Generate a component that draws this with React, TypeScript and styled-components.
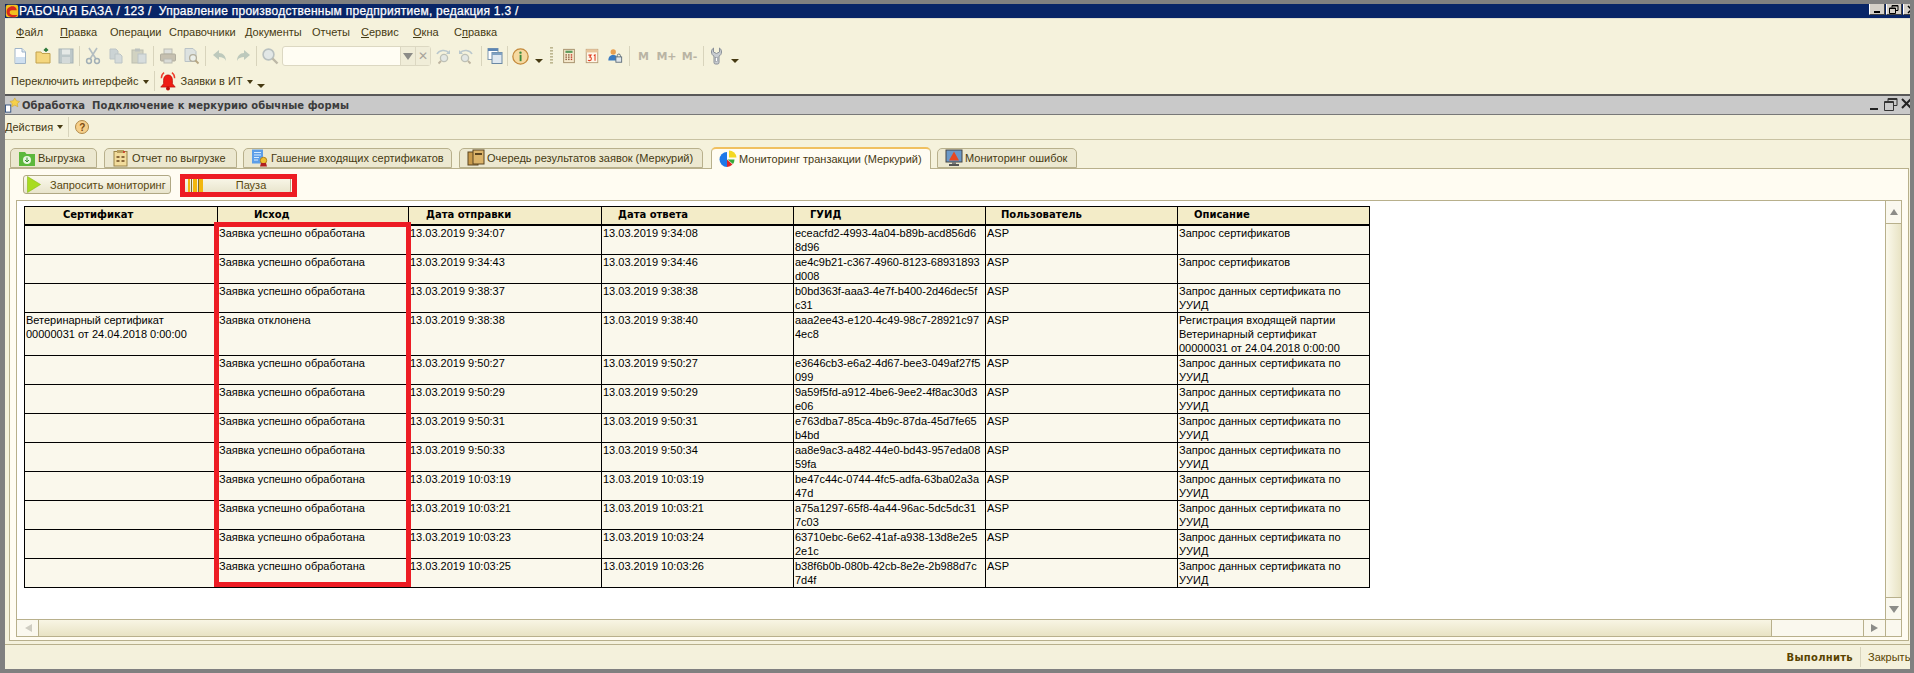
import React from "react";
import styled, { createGlobalStyle } from "styled-components";

const UI_FONT = `"Liberation Sans", Arial, sans-serif`;
const BOLD_FONT = `"DejaVu Sans", Verdana, sans-serif`;

const GlobalStyle = createGlobalStyle`
  html, body { margin: 0; padding: 0; background: #808080; }
  body { font-family: ${UI_FONT}; font-size: 11px; color: #463a12; }
  * { box-sizing: border-box; }
`;

const Desktop = styled.div`
  width: 1914px;
  height: 673px;
  overflow: hidden;
  background: #f4f1dc;
  border: solid #808080;
  border-width: 4px 4px 4px 5px;
  display: flex;
  flex-direction: column;
`;

/* main window title */
const TitleBar = styled.div`
  height: 14px;
  flex: none;
  background: #082567;
  color: #fff;
  display: flex;
  align-items: center;
  font-size: 12px;
  letter-spacing: 0.26px;
  position: relative;
  white-space: pre;
  -webkit-text-stroke: 0.25px #fff;
`;

const TitleText = styled.span`
  margin-left: 0;
  flex: 1;
`;

const WinButtons = styled.div`
  display: flex;
  height: 11px;
  align-self: flex-start;
  gap: 1px;
  margin-right: -9px;
`;

const WinButton = styled.div`
  width: 16px;
  height: 11px;
  background: #d4d0c8;
  border-right: 1px solid #404040;
  border-bottom: 1px solid #404040;
  border-left: 1px solid #fff;
  display: flex;
  align-items: center;
  justify-content: center;
`;

const MenuArea = styled.div`
  height: 76px;
  flex: none;
  background: #f5f2dc;
  border-top: 1px solid #e2e0d0;
`;

const MenuRow = styled.div`
  height: 25px;
  display: flex;
  align-items: center;
  padding-left: 11px;
  font-size: 11px;
`;

const MenuItem = styled.span<{ $w?: number }>`
  width: ${(p) => (p.$w ? `${p.$w}px` : "auto")};
  flex: none;
`;

const ToolRow = styled.div`
  height: 24px;
  display: flex;
  align-items: center;
  padding-left: 3px;
`;

const ToolSlot = styled.div<{ $w?: number; $dim?: boolean }>`
  width: ${(p) => p.$w || 23}px;
  height: 20px;
  flex: none;
  display: flex;
  align-items: center;
  justify-content: center;
  opacity: ${(p) => (p.$dim ? 0.72 : 1)};
`;

const ToolSep = styled.div<{ $w?: number }>`
  width: ${(p) => p.$w || 6}px;
  height: 20px;
  flex: none;
  display: flex;
  justify-content: center;

  &::after {
    content: "";
    width: 1px;
    background: #d8d4bc;
  }
`;

const MemKey = styled.span`
  font-family: ${BOLD_FONT};
  font-weight: bold;
  font-size: 11px;
  color: #b9b4a4;
`;

const DownMark = styled.div`
  margin-top: 10px;
  width: 0;
  height: 0;
  border: 4px solid transparent;
  border-top: 4px solid #463a12;
  border-bottom: 0;
`;

const SearchBox = styled.div`
  width: 149px;
  height: 20px;
  margin-left: 1px;
  flex: none;
  display: flex;
  background: #fffdf3;
  border: 1px solid #dcd8c2;
  border-radius: 3px;
`;

const SearchInput = styled.div`
  flex: 1;
`;

const SearchBtn = styled.div`
  width: 15px;
  background: #f0edd8;
  border-left: 1px solid #dcd8c2;
  display: flex;
  align-items: center;
  justify-content: center;
  color: #a8a49a;
  font-size: 12px;
`;

const LinkRow = styled.div`
  height: 26px;
  display: flex;
  align-items: center;
  padding-left: 3px;
  font-size: 11px;
  position: relative;
`;

const SmallArrow = styled.span`
  display: inline-block;
  width: 0;
  height: 0;
  margin-left: 4px;
  border: 3px solid transparent;
  border-top: 4px solid #463a12;
  border-bottom: 0;
  vertical-align: middle;
`;

const LinkSep = styled.div`
  width: 1px;
  height: 20px;
  background: #d8d4bc;
  margin: 0 3px 0 5px;
`;

const LinkLabel = styled.span`
  white-space: nowrap;
  margin-left: 3px;
`;

/* child window */
const ChildTitle = styled.div`
  height: 21px;
  flex: none;
  background: #c9c9c9;
  border-top: 2px solid #585858;
  border-bottom: 1px solid #787878;
  display: flex;
  align-items: center;
  font-family: ${BOLD_FONT};
  font-weight: bold;
  font-size: 10px;
  letter-spacing: 0.05px;
  color: #3c3c3c;
  white-space: pre;
`;

const ChildName = styled.span`
  flex: 1;
  margin-left: 1px;
`;

const ChildButtons = styled.div`
  display: flex;
  gap: 3px;
  margin-right: -3px;
`;

const ActionsRow = styled.div`
  height: 25px;
  flex: none;
  background: #f5f2dc;
  border-bottom: 1px solid #c8c2a2;
  display: flex;
  align-items: center;
  font-size: 11px;
`;

const HelpRound = styled.div`
  width: 14px;
  height: 14px;
  border-radius: 50%;
  margin-left: 3px;
  background: #f6cf8a;
  border: 1px solid #b08a4a;
  color: #7a4a10;
  font-size: 10px;
  font-weight: bold;
  display: flex;
  align-items: center;
  justify-content: center;
`;

const TabStrip = styled.div`
  height: 28px;
  flex: none;
  display: flex;
  align-items: flex-end;
  padding-left: 5px;
  background: #f5f2dc;
`;

const Tab = styled.div<{ $active?: boolean; $w: number; $gap: number }>`
  width: ${(p) => p.$w}px;
  height: ${(p) => (p.$active ? 22 : 20)}px;
  margin-right: ${(p) => p.$gap}px;
  flex: none;
  display: flex;
  align-items: center;
  padding-left: 7px;
  gap: 2px;
  font-size: 11px;
  white-space: nowrap;
  background: ${(p) => (p.$active ? "#fffcf2" : "#ece8d0")};
  border: 1px solid #b8b08c;
  border-top: ${(p) => (p.$active ? "2px solid #f0c060" : "1px solid #b8b08c")};
  border-bottom: ${(p) => (p.$active ? "0" : "1px solid #b8b08c")};
  border-radius: 5px 5px 0 0;
  position: relative;
  top: ${(p) => (p.$active ? 1 : 0)}px;
`;

const TabPanel = styled.div`
  flex: none;
  height: 473px;
  margin: 0 1px 0 4px;
  background: #fffcf2;
  border: 1px solid #b8b08c;
  border-bottom-width: 1px;
  padding: 0 6px 3px 6px;
  display: flex;
  flex-direction: column;
`;

const ButtonRow = styled.div`
  height: 31px;
  flex: none;
  display: flex;
  gap: 13px;
  padding: 6px 0 0 7px;
  align-items: flex-start;
`;

const FormButton = styled.div<{ $w: number }>`
  width: ${(p) => p.$w}px;
  height: 19px;
  flex: none;
  position: relative;
  display: flex;
  align-items: center;
  font-size: 11px;
  color: #5a4810;
  background: linear-gradient(#fbf9ec, #e8e4cc);
  border: 1px solid #b0a884;
  border-radius: 3px;
  padding-left: 3px;
`;

const ButtonLabel = styled.span<{ $center?: boolean }>`
  flex: 1;
  margin-left: 9px;
  text-align: ${(p) => (p.$center ? "center" : "left")};
  white-space: nowrap;
`;

const RedFrame = styled.div`
  position: absolute;
  border: 5px solid #ed1c24;
  pointer-events: none;
`;

const PauseFrame = styled(RedFrame)`
  left: -5px;
  top: -2px;
  width: 117px;
  height: 23px;
`;

const InnerPanel = styled.div`
  flex: 1;
  min-height: 0;
  background: #fff;
  border: 1px solid #b8b08c;
  display: grid;
  grid-template-columns: 1fr 16px;
  grid-template-rows: 1fr 17px;
`;

const Viewport = styled.div`
  padding: 5px 0 0 7px;
  overflow: hidden;
`;

const TableWrap = styled.div`
  position: relative;
  width: 1346px;
`;

const ResultFrame = styled(RedFrame)`
  left: 190px;
  top: 16px;
  width: 197px;
  height: 365px;
`;

const Grid = styled.table`
  width: 1346px;
  table-layout: fixed;
  border-collapse: collapse;
  font-size: 11px;
  line-height: 14px;
  color: #000;
`;

const HeadCell = styled.th<{ $pad: number }>`
  height: 18px;
  padding: 0 0 0 ${(p) => p.$pad}px;
  text-align: left;
  background: #f3ecc8;
  border: 1px solid #000;
  border-bottom: 2px solid #000;
  font-family: ${BOLD_FONT};
  font-size: 10px;
  font-weight: bold;
  white-space: nowrap;
`;

const Cell = styled.td<{ $h: number }>`
  height: ${(p) => p.$h}px;
  padding: 0 0 0 1px;
  vertical-align: top;
  background: #faf8ec;
  border: 1px solid #000;
  white-space: pre-line;
  overflow: hidden;
`;

const VScroll = styled.div`
  display: flex;
  flex-direction: column;
  border-left: 1px solid #b8b08c;
`;

const HScroll = styled.div`
  display: flex;
  border-top: 1px solid #b8b08c;
  grid-column: 1;
`;

const ScrollButton = styled.div<{ $size: number; $vertical?: boolean }>`
  flex: none;
  width: ${(p) => (p.$vertical ? "100%" : `${p.$size}px`)};
  height: ${(p) => (p.$vertical ? `${p.$size}px` : "100%")};
  background: #faf8ee;
  display: flex;
  align-items: center;
  justify-content: center;
`;

const ThumbH = styled.div<{ $w: number }>`
  width: ${(p) => p.$w}px;
  flex: none;
  background: linear-gradient(#f8f5e4, #e8e3c4);
  border: solid #b8b08c;
  border-width: 0 1px;
`;

const ThumbV = styled.div`
  flex: 1;
  background: linear-gradient(90deg, #fbf9ec, #e8e3c4);
  border: solid #b8b08c;
  border-width: 1px 0;
`;

const Track = styled.div`
  flex: 1;
  background: #faf8ee;
  border-right: 1px solid #b8b08c;
`;

const ScrollCorner = styled.div`
  background: #faf8ee;
  border: solid #b8b08c;
  border-width: 1px 0 0 1px;
`;

const FooterBar = styled.div`
  flex: 1;
  margin-top: 3px;
  background: #f4f1dc;
  border-top: 1px solid #b8b08c;
  display: flex;
  align-items: center;
  justify-content: flex-end;
  color: #5a4400;
  font-size: 11px;
  white-space: nowrap;
`;

const RunLabel = styled.span`
  font-family: ${BOLD_FONT};
  font-weight: bold;
  font-size: 10px;
  letter-spacing: 0.3px;
`;

const FooterSep = styled.div`
  width: 1px;
  height: 20px;
  background: #d8d4bc;
  margin: 0 7px;
`;

const CloseLabel = styled.span`
  width: 42px;
`;

/* ---------- icons ---------- */

const Ico = ({ s = 18, children }: { s?: number; children: React.ReactNode }) => (
  <svg width={s} height={s} viewBox="0 0 18 18" style={{ flex: "none" }}>
    {children}
  </svg>
);

const Arrow = ({ dir }: { dir: "l" | "r" | "u" | "d" }) => {
  const pts = { l: "10,2 3,6 10,10", r: "2,2 9,6 2,10", u: "2,9 6,3 10,9", d: "1,3 11,3 6,10" }[dir];
  return (
    <svg width="12" height="12" viewBox="0 0 12 12">
      <polygon points={pts} fill={dir === "l" ? "#cfcdc2" : "#8c8c88"} />
    </svg>
  );
};

const LogoIcon = () => (
  <Ico s={14}>
    <rect x="1" y="1" width="16" height="16" rx="3" fill="#f0c020" />
    <path d="M2 10c0-5 5-8 9-7 3 1 4 3 4 5H9c-2 0-3 1-3 3s2 3 4 3h6c-1 2-3 3-6 3-5 0-8-3-8-7z" fill="#d8281c" />
  </Ico>
);

const NewDoc = () => (
  <Ico>
    <path d="M4 1.5h7l3.5 3.5v11.5H4z" fill="#fff" stroke="#9fb4c8" />
    <path d="M11 1.5V5h3.5" fill="#dce8f2" stroke="#9fb4c8" />
    <path d="M5 10h9v6H5z" fill="#cfe0f0" />
  </Ico>
);
const OpenDoc = () => (
  <Ico>
    <path d="M2 5h5l1 1.5h8v9.5H2z" fill="#f5d77e" stroke="#c2a24e" />
    <path d="M12 5V1.5M10 3.5l2-2 2 2" stroke="#2f7a3c" strokeWidth="1.4" fill="none" />
  </Ico>
);
const SaveDoc = () => (
  <Ico>
    <rect x="2" y="2" width="14" height="14" fill="#a8b8c2" stroke="#8a9aa6" />
    <rect x="5" y="2.5" width="8" height="5" fill="#dfe6ea" />
    <rect x="5" y="10" width="8" height="6" fill="#c8d2d8" />
  </Ico>
);
const Scissors = () => (
  <Ico>
    <path d="M5 1l7 11M13 1L6 12" stroke="#9aaab8" strokeWidth="1.6" fill="none" />
    <circle cx="5" cy="14" r="2.4" fill="none" stroke="#8296a8" strokeWidth="1.5" />
    <circle cx="13" cy="14" r="2.4" fill="none" stroke="#8296a8" strokeWidth="1.5" />
  </Ico>
);
const CopyDoc = () => (
  <Ico>
    <path d="M3 2h6l2 2v8H3z" fill="#bcc8d2" stroke="#a8b4be" />
    <path d="M8 7h5l2 2v7H8z" fill="#c8d2da" stroke="#a8b4be" />
  </Ico>
);
const PasteDoc = () => (
  <Ico>
    <rect x="2" y="3" width="11" height="13" fill="#c4c6b8" stroke="#a8aca0" />
    <rect x="5" y="1.5" width="5" height="3" fill="#a8b0b4" />
    <rect x="8" y="7" width="8" height="9" fill="#ccd6de" stroke="#a8b4be" />
  </Ico>
);
const Printer = () => (
  <Ico>
    <rect x="5" y="2" width="8" height="5" fill="#d6dadc" stroke="#a8a8a4" />
    <rect x="1.5" y="7" width="15" height="7" rx="1" fill="#b4aea0" stroke="#989488" />
    <rect x="5" y="12" width="8" height="4" fill="#d0d4d6" stroke="#a8a8a4" />
  </Ico>
);
const Preview = () => (
  <Ico>
    <path d="M3 1.5h8l3 3v10H3z" fill="#d4dce2" stroke="#a4b2be" />
    <circle cx="11" cy="11" r="3.4" fill="#e8eef0" stroke="#9a9484" strokeWidth="1.3" />
    <path d="M13.5 13.5L16.5 16.5" stroke="#a08a60" strokeWidth="1.8" />
  </Ico>
);
const Undo = ({ flip }: { flip?: boolean }) => (
  <Ico>
    <path
      d={flip ? "M10 3l6 5-6 5v-3C7 10 4 11 3 14c0-5 3-8 7-8z" : "M8 3L2 8l6 5v-3c3 0 6 1 7 4 0-5-3-8-7-8z"}
      fill="#a8bab0"
    />
  </Ico>
);
const Magnifier = () => (
  <Ico>
    <circle cx="7.5" cy="7.5" r="5.4" fill="#dbe4ea" stroke="#a2aeb6" strokeWidth="1.6" />
    <path d="M11.5 11.5l5 5" stroke="#a8a294" strokeWidth="2.4" />
  </Ico>
);
const FindArrow = ({ flip }: { flip?: boolean }) => (
  <Ico>
    <g transform={flip ? "translate(18,0) scale(-1,1)" : undefined}>
      <circle cx="10" cy="11" r="3.6" fill="#dde4e8" stroke="#a8aea8" strokeWidth="1.3" />
      <path d="M7 14l-2.5 2.5" stroke="#a89c88" strokeWidth="1.8" />
      <path d="M3 7c2-4 9-5 12-1" stroke="#a4b8c8" strokeWidth="1.6" fill="none" />
      <path d="M16 3v4h-4z" fill="#a4b8c8" />
    </g>
  </Ico>
);
const Windows = () => (
  <Ico>
    <rect x="2" y="1.5" width="10" height="11" fill="#fff" stroke="#7f98b0" />
    <rect x="2" y="1.5" width="10" height="2.5" fill="#5c86b4" />
    <rect x="6" y="5.5" width="10" height="11" fill="#dfe8f0" stroke="#6a88a4" />
    <rect x="6" y="5.5" width="10" height="2.5" fill="#7ea0c2" />
  </Ico>
);
const InfoIcon = () => (
  <svg width="17" height="17" viewBox="0 0 20 20">
    <circle cx="10" cy="10" r="9" fill="#f6d9a0" stroke="#c48a3c" strokeWidth="1.5" />
    <circle cx="10" cy="5.5" r="1.4" fill="#3c8a3c" />
    <rect x="9" y="8" width="2.2" height="7.5" fill="#3c8a3c" />
  </svg>
);
const DottedBar = () => (
  <svg width="4" height="20" viewBox="0 0 4 20">
    {[1, 4, 7, 10, 13, 16].map((y) => (
      <rect key={y} x="0" y={y} width="3" height="1.6" fill="#bdb690" />
    ))}
  </svg>
);
const CalcIcon = () => (
  <Ico s={16}>
    <rect x="3" y="1.5" width="12" height="15" fill="#f5e9cc" stroke="#a08a64" />
    <rect x="5" y="3" width="8" height="2.5" fill="#5a9a5c" />
    {[7, 9.5, 12].map((y) => (
      <g key={y} fill="#8a5a3c">
        <rect x="5" y={y} width="1.6" height="1.6" />
        <rect x="8" y={y} width="1.6" height="1.6" />
        <rect x="11" y={y} width="1.6" height="1.6" fill="#c03c2c" />
      </g>
    ))}
  </Ico>
);
const CalendarIcon = () => (
  <Ico s={16}>
    <rect x="2.5" y="1.5" width="13" height="15" fill="#fff6e8" stroke="#b49a74" />
    <rect x="2.5" y="1.5" width="13" height="3.5" fill="#e8c49a" />
    <path d="M5 8h3l-1.5 2.2c1.5 0 1.8 1 1.8 2 0 1.2-1 2-2 2-.7 0-1.4-.2-1.8-.6M11 8.5l1.4-.7v6.6" fill="none" stroke="#e03c20" strokeWidth="1.2" />
  </Ico>
);
const UserLock = () => (
  <Ico s={16}>
    <circle cx="7" cy="4.5" r="3" fill="#e8a050" />
    <path d="M1.5 14c0-4 2.5-6 5.5-6 1.5 0 2.5.4 3.5 1v5z" fill="#3a7ac0" />
    <rect x="10" y="10" width="6.5" height="6" fill="#dfe6ea" stroke="#5a6a78" />
    <path d="M11.5 10V8.6a1.8 1.8 0 013.6 0V10" fill="none" stroke="#5a6a78" />
  </Ico>
);
const Wrench = () => (
  <svg width="11" height="18" viewBox="0 0 11 18">
    <path d="M2.500 1v4l3 1.500L8.500 5V1C10 2 10.500 3.600 10.500 5c0 2-1 3.400-2.500 4.200V15.500A1.500 1.500 0 016.500 17h-2A1.500 1.500 0 013 15.500V9.200C1.500 8.400.500 7 .500 5c0-1.400.500-3 2-4z" fill="#c8ccd0" stroke="#8a9098" />
    <rect x="4.500" y="10.500" width="2" height="4" fill="#fff" stroke="#8a9098" strokeWidth=".6" />
  </svg>
);
const BellIcon = () => (
  <Ico s={20}>
    <path d="M9 3.500c-3 0-4 2.500-4 5v3L2.500 14.500h13L13 11.500v-3c0-2.500-1-5-4-5z" fill="#ee1c14" stroke="#b00c08" strokeWidth=".6" />
    <circle cx="9" cy="15.800" r="1.800" fill="#c00c08" />
    <path d="M3 6.500C3 4 4 2.500 5.500 1.500M15 6.500c0-2.500-1-4-2.500-5" fill="none" stroke="#ee3c2c" strokeWidth="1.200" />
  </Ico>
);
const ChildFormIcon = () => (
  <Ico s={16}>
    <rect x="0.500" y="9" width="6" height="8" fill="#fff" stroke="#2a4a78" />
    <path d="M11 1l1.800 3.200L16.500 5 13.800 7.500l.7 3.500L11 9.200 7.500 11l.7-3.500L5.500 5l3.700-.8z" fill="#f6d04a" stroke="#c8a030" strokeWidth=".6" />
  </Ico>
);
const MinGlyph = () => (
  <svg width="9" height="9" viewBox="0 0 9 9">
    <rect x="1" y="6" width="6" height="2" fill="#000" />
  </svg>
);
const RestoreGlyph = () => (
  <svg width="10" height="9" viewBox="0 0 10 9" fill="none" stroke="#000">
    <path d="M3 2.500V.500h6v5H7" />
    <path d="M.500 3h6v5.500h-6z" />
    <path d="M.500 3.500h6M3 1h6" />
  </svg>
);
const CloseGlyph = () => (
  <svg width="9" height="9" viewBox="0 0 9 9" stroke="#000" strokeWidth="1.500">
    <path d="M1 1l7 7M8 1L1 8" />
  </svg>
);
const ChildMin = () => (
  <svg width="16" height="14" viewBox="0 0 16 14">
    <rect x="5" y="10" width="8" height="2" fill="#222" />
  </svg>
);
const ChildRestore = () => (
  <svg width="14" height="14" viewBox="0 0 14 14" fill="none" stroke="#333">
    <path d="M4 3.500V.500h9v7h-3" />
    <path d="M.500 3.500h9v9h-9z" />
    <path d="M.500 4.500h9M4 1.500h9" />
  </svg>
);
const ChildClose = () => (
  <svg width="12" height="12" viewBox="0 0 12 12" stroke="#222" strokeWidth="2">
    <path d="M1 1l9 9M10 1L1 10" />
  </svg>
);

const TabUpload = () => (
  <Ico>
    <path d="M1 3h6l1.500 2H17v12H1z" fill="#5cb83c" />
    <circle cx="9" cy="11" r="4" fill="#e8f6e0" />
    <path d="M9 8.500v4M7 11l2 2 2-2" stroke="#2f8a2c" fill="none" />
  </Ico>
);
const TabReport = () => (
  <Ico>
    <rect x="2" y="2.500" width="13" height="14.500" fill="#f2dc9c" stroke="#9a8448" />
    <rect x="5" y="1" width="7" height="3" fill="#b8a060" />
    <path d="M11 3h2M12 2v2" stroke="#d02c20" />
    <path d="M4.500 7h3v2h-3zM4.500 11h3v2h-3zM9.500 7h3v2h-3zM9.500 11h3v2h-3z" fill="#8a6a3c" />
  </Ico>
);
const TabCert = () => (
  <Ico>
    <rect x="1" y="0.500" width="11" height="14" fill="#5c9ee8" />
    <path d="M3 3.500h7M3 6h7M3 8.500h5M3 11h4" stroke="#d8ecff" />
    <circle cx="12.500" cy="11.500" r="3.200" fill="#f0c030" stroke="#b08018" />
    <path d="M10 14l-1 3.500h7L15 14" fill="#b02020" />
  </Ico>
);
const TabQueue = () => (
  <Ico>
    <rect x="1" y="3" width="10" height="13" fill="#c89a4c" stroke="#5a4420" />
    <rect x="6" y="1" width="11" height="14" fill="#dcb46a" stroke="#5a4420" />
    <rect x="8" y="4" width="7" height="2" fill="#5a4420" />
  </Ico>
);
const TabPie = () => (
  <Ico>
    <path d="M8 2a7.500 7.500 0 000 15 z" fill="#1e78e8" />
    <path d="M8 9.500V17a7.500 7.500 0 005.500-2.500z" fill="#e02828" />
    <path d="M8.500 9.500l5.500 4.500a7.500 7.500 0 001.500-4.500z" fill="#38a838" />
    <path d="M10 0.500V7.500h7.500A7.500 7.500 0 0010 .500z" fill="#f4d820" />
  </Ico>
);
const TabMonitor = () => (
  <Ico>
    <rect x="1" y="1" width="16" height="12" fill="#6a98c8" stroke="#444" />
    <polygon points="9,2.500 14,11.500 4,11.500" fill="#e84820" />
    <rect x="7" y="13" width="4" height="2" fill="#777" />
    <rect x="4" y="15" width="10" height="2" fill="#555" />
  </Ico>
);
const PlayIcon = () => (
  <svg width="14" height="17" viewBox="0 0 14 17" style={{ flex: "none" }}>
    <polygon points="0.500,0.500 13.500,8.500 0.500,16.500" fill="#a8dc20" stroke="#86b818" strokeWidth=".6" />
  </svg>
);
const PauseIcon = () => (
  <svg width="15" height="14" viewBox="0 0 15 14" style={{ flex: "none" }}>
    <rect x="0" y="0" width="2" height="14" fill="#f2b70e" />
    <rect x="3" y="0" width="1" height="14" fill="#7a6a2a" />
    <rect x="5" y="0" width="4" height="14" fill="#f2b70e" />
    <rect x="10" y="0" width="1" height="14" fill="#7a6a2a" />
    <rect x="11" y="0" width="4" height="14" fill="#f2b70e" />
  </svg>
);

/* ---------- data ---------- */

const MENU: { label: React.ReactNode; w?: number }[] = [
  { label: <><u>Ф</u>айл</>, w: 44 },
  { label: <><u>П</u>равка</>, w: 50 },
  { label: "Операции", w: 59 },
  { label: "Справочники", w: 76 },
  { label: "Документы", w: 67 },
  { label: "Отчеты", w: 49 },
  { label: <><u>С</u>ервис</>, w: 52 },
  { label: <><u>О</u>кна</>, w: 41 },
  { label: <>С<u>п</u>равка</> },
];

const COLUMNS = [
  { title: "Сертификат", pad: 38, w: 193 },
  { title: "Исход", pad: 36, w: 191 },
  { title: "Дата отправки", pad: 17, w: 193 },
  { title: "Дата ответа", pad: 16, w: 192 },
  { title: "ГУИД", pad: 16, w: 192 },
  { title: "Пользователь", pad: 15, w: 192 },
  { title: "Описание", pad: 16, w: 192 },
];

const OK = "Заявка успешно обработана";
const BY_UUID = "Запрос данных сертификата по\nУУИД";
const CERTS = "Запрос сертификатов";

const ROWS = [
  ["", OK, "13.03.2019 9:34:07", "13.03.2019 9:34:08", "eceacfd2-4993-4a04-b89b-acd856d6\n8d96", CERTS],
  ["", OK, "13.03.2019 9:34:43", "13.03.2019 9:34:46", "ae4c9b21-c367-4960-8123-68931893\nd008", CERTS],
  ["", OK, "13.03.2019 9:38:37", "13.03.2019 9:38:38", "b0bd363f-aaa3-4e7f-b400-2d46dec5f\nc31", BY_UUID],
  [
    "Ветеринарный сертификат\n00000031 от 24.04.2018 0:00:00",
    "Заявка отклонена",
    "13.03.2019 9:38:38",
    "13.03.2019 9:38:40",
    "aaa2ee43-e120-4c49-98c7-28921c97\n4ec8",
    "Регистрация входящей партии\nВетеринарный сертификат\n00000031 от 24.04.2018 0:00:00",
  ],
  ["", OK, "13.03.2019 9:50:27", "13.03.2019 9:50:27", "e3646cb3-e6a2-4d67-bee3-049af27f5\n099", BY_UUID],
  ["", OK, "13.03.2019 9:50:29", "13.03.2019 9:50:29", "9a59f5fd-a912-4be6-9ee2-4f8ac30d3\ne06", BY_UUID],
  ["", OK, "13.03.2019 9:50:31", "13.03.2019 9:50:31", "e763dba7-85ca-4b9c-87da-45d7fe65\nb4bd", BY_UUID],
  ["", OK, "13.03.2019 9:50:33", "13.03.2019 9:50:34", "aa8e9ac3-a482-44e0-bd43-957eda08\n59fa", BY_UUID],
  ["", OK, "13.03.2019 10:03:19", "13.03.2019 10:03:19", "be47c44c-0744-4fc5-adfa-63ba02a3a\n47d", BY_UUID],
  ["", OK, "13.03.2019 10:03:21", "13.03.2019 10:03:21", "a75a1297-65f8-4a44-96ac-5dc5dc31\n7c03", BY_UUID],
  ["", OK, "13.03.2019 10:03:23", "13.03.2019 10:03:24", "63710ebc-6e62-41af-a938-13d8e2e5\n2e1c", BY_UUID],
  ["", OK, "13.03.2019 10:03:25", "13.03.2019 10:03:26", "b38f6b0b-080b-42cb-8e2e-2b988d7c\n7d4f", BY_UUID],
];

export default function App() {
  return (
    <>
      <GlobalStyle />
      <Desktop>
        <TitleBar>
          <LogoIcon />
          <TitleText>РАБОЧАЯ БАЗА / 123 /  Управление производственным предприятием, редакция 1.3 /</TitleText>
          <WinButtons>
            <WinButton><MinGlyph /></WinButton>
            <WinButton><RestoreGlyph /></WinButton>
            <WinButton><CloseGlyph /></WinButton>
          </WinButtons>
        </TitleBar>

        <MenuArea>
          <MenuRow>
            {MENU.map((m, i) => (
              <MenuItem key={i} $w={m.w}>{m.label}</MenuItem>
            ))}
          </MenuRow>
          <ToolRow>
            <ToolSlot><NewDoc /></ToolSlot>
            <ToolSlot><OpenDoc /></ToolSlot>
            <ToolSlot $dim><SaveDoc /></ToolSlot>
            <ToolSep $w={4} />
            <ToolSlot $dim><Scissors /></ToolSlot>
            <ToolSlot $dim><CopyDoc /></ToolSlot>
            <ToolSlot $dim><PasteDoc /></ToolSlot>
            <ToolSep />
            <ToolSlot $dim><Printer /></ToolSlot>
            <ToolSlot $dim><Preview /></ToolSlot>
            <ToolSep />
            <ToolSlot $dim><Undo /></ToolSlot>
            <ToolSlot $dim><Undo flip /></ToolSlot>
            <ToolSep $w={4} />
            <ToolSlot $dim><Magnifier /></ToolSlot>
            <SearchBox>
              <SearchInput />
              <SearchBtn><Arrow dir="d" /></SearchBtn>
              <SearchBtn>✕</SearchBtn>
            </SearchBox>
            <ToolSlot $dim><FindArrow /></ToolSlot>
            <ToolSlot $dim><FindArrow flip /></ToolSlot>
            <ToolSep $w={8} />
            <ToolSlot $w={20}><Windows /></ToolSlot>
            <ToolSep $w={4} />
            <ToolSlot><InfoIcon /></ToolSlot>
            <ToolSlot $w={14}><DownMark /></ToolSlot>
            <ToolSlot $w={11}><DottedBar /></ToolSlot>
            <ToolSlot><CalcIcon /></ToolSlot>
            <ToolSlot><CalendarIcon /></ToolSlot>
            <ToolSlot><UserLock /></ToolSlot>
            <ToolSep />
            <ToolSlot><MemKey>M</MemKey></ToolSlot>
            <ToolSlot><MemKey>M+</MemKey></ToolSlot>
            <ToolSlot><MemKey>M-</MemKey></ToolSlot>
            <ToolSep $w={4} />
            <ToolSlot><Wrench /></ToolSlot>
            <ToolSlot $w={14}><DownMark /></ToolSlot>
          </ToolRow>
          <LinkRow>
            <LinkLabel>Переключить интерфейс<SmallArrow /></LinkLabel>
            <LinkSep />
            <BellIcon />
            <LinkLabel>Заявки в ИТ<SmallArrow /></LinkLabel>
            <ToolSlot $w={16}><DownMark /></ToolSlot>
          </LinkRow>
        </MenuArea>

        <ChildTitle>
          <ChildFormIcon />
          <ChildName>Обработка  Подключение к меркурию обычные формы</ChildName>
          <ChildButtons>
            <ChildMin />
            <ChildRestore />
            <ChildClose />
          </ChildButtons>
        </ChildTitle>

        <ActionsRow>
          Действия<SmallArrow />
          <LinkSep />
          <HelpRound>?</HelpRound>
        </ActionsRow>

        <TabStrip>
          <Tab $w={87} $gap={7}><TabUpload />Выгрузка</Tab>
          <Tab $w={133} $gap={6}><TabReport />Отчет по выгрузке</Tab>
          <Tab $w={209} $gap={7}><TabCert />Гашение входящих сертификатов</Tab>
          <Tab $w={244} $gap={8}><TabQueue />Очередь результатов заявок (Меркурий)</Tab>
          <Tab $w={220} $gap={6} $active><TabPie />Мониторинг транзакции (Меркурий)</Tab>
          <Tab $w={140} $gap={0}><TabMonitor />Мониторинг ошибок</Tab>
        </TabStrip>

        <TabPanel>
          <ButtonRow>
            <FormButton $w={148}>
              <PlayIcon />
              <ButtonLabel>Запросить мониторинг</ButtonLabel>
            </FormButton>
            <FormButton $w={107}>
              <PauseIcon />
              <ButtonLabel $center>Пауза</ButtonLabel>
              <PauseFrame />
            </FormButton>
          </ButtonRow>
          <InnerPanel>
            <Viewport>
              <TableWrap>
                <Grid>
                  <colgroup>
                    {COLUMNS.map((c) => (
                      <col key={c.title} style={{ width: c.w }} />
                    ))}
                  </colgroup>
                  <thead>
                    <tr>
                      {COLUMNS.map((c) => (
                        <HeadCell key={c.title} $pad={c.pad}>{c.title}</HeadCell>
                      ))}
                    </tr>
                  </thead>
                  <tbody>
                    {ROWS.map((r, i) => {
                      const h = i === 3 ? 42 : 28;
                      return (
                        <tr key={i}>
                          {[r[0], r[1], r[2], r[3], r[4], "ASP", r[5]].map((v, j) => (
                            <Cell key={j} $h={h}>{v}</Cell>
                          ))}
                        </tr>
                      );
                    })}
                  </tbody>
                </Grid>
                <ResultFrame />
              </TableWrap>
            </Viewport>
            <VScroll>
              <ScrollButton $size={22} $vertical><Arrow dir="u" /></ScrollButton>
              <ThumbV />
              <ScrollButton $size={21} $vertical><Arrow dir="d" /></ScrollButton>
            </VScroll>
            <HScroll>
              <ScrollButton $size={21}><Arrow dir="l" /></ScrollButton>
              <ThumbH $w={1734} />
              <Track />
              <ScrollButton $size={21}><Arrow dir="r" /></ScrollButton>
            </HScroll>
            <ScrollCorner />
          </InnerPanel>
        </TabPanel>

        <FooterBar>
          <RunLabel>Выполнить</RunLabel>
          <FooterSep />
          <CloseLabel>Закрыть</CloseLabel>
        </FooterBar>
      </Desktop>
    </>
  );
}
